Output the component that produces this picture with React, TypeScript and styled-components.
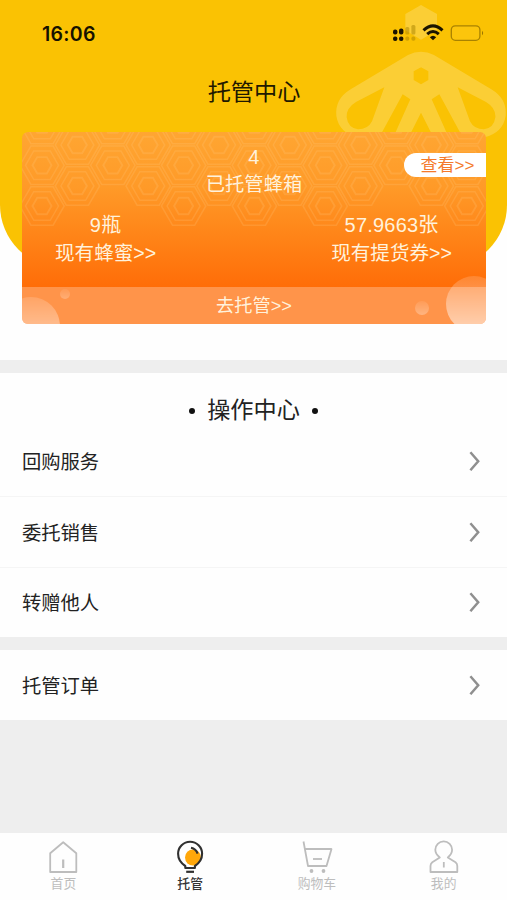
import React from 'react';
import styled, { createGlobalStyle } from 'styled-components';

const GlobalStyle = createGlobalStyle`
  * { box-sizing: border-box; }
  body {
    margin: 0;
    background: #eee;
    font-family: "Liberation Sans", "Noto Sans CJK SC", sans-serif;
    color: #222;
  }
`;

const Screen = styled.div`
  display: flex;
  flex-direction: column;
  width: 507px;
  height: 900px;
  overflow: hidden;
  background: #eee;
`;

const Hero = styled.header`
  position: relative;
  flex: none;
  height: 360px;
  padding: 0 21px 0 22px;
  background: #fefefe;
`;

const HeroShape = styled.div`
  position: absolute;
  inset: 0 0 auto 0;
  height: 268px;
  border-radius: 0 0 63px 63px;
  background: #fac203;
  overflow: hidden;
`;

const BeeMark = styled.svg`
  position: absolute;
  top: 0;
  right: 0;
`;

const StatusBar = styled.div`
  position: relative;
  display: flex;
  align-items: center;
  justify-content: space-between;
  height: 66px;
  padding: 0 1px 0 20px;
`;

const Clock = styled.span`
  padding-top: 1px;
  font: 600 19.5px/24px Inter, sans-serif;
  letter-spacing: 0.3px;
  color: #161100;
`;

const Title = styled.h1`
  position: relative;
  margin: 0;
  height: 66px;
  padding-top: 9px;
  font-size: 23.2px;
  line-height: 34px;
  font-weight: 400;
  text-align: center;
  color: #201800;
`;

const Card = styled.section`
  position: relative;
  display: flex;
  flex-direction: column;
  height: 192px;
  border-radius: 6px;
  overflow: hidden;
  background: linear-gradient(#ffa632 0, #ff9a28 55px, #ff8619 100px, #ff6d08 155px);
  color: #fff2dc;
`;

const CardArt = styled.svg`
  position: absolute;
  inset: 0;
`;

const Stat = styled.div`
  position: relative;
  display: flex;
  flex-direction: column;
  align-items: center;
  font-size: 19.6px;
  line-height: 28.8px;
  white-space: nowrap;
`;

const Value = styled.span`
  font-size: 20px;
  letter-spacing: 0.2px;
`;

const Total = styled(Stat)`
  padding-top: 10.5px;
  height: 77.5px;
  font-size: 19.3px;
`;

const Pair = styled.div`
  display: flex;
  justify-content: space-between;
  flex: 1;
  padding: 1px 34px 0 33px;
`;

const Pill = styled.button`
  position: absolute;
  top: 21px;
  right: 0;
  width: 82px;
  height: 24px;
  padding: 0 0 0 5px;
  border: 0;
  border-radius: 12px 0 0 12px;
  background: #fff;
  color: #f47a2c;
  font: inherit;
  font-size: 17px;
  line-height: 23px;
`;

const CardAction = styled.button`
  position: relative;
  height: 37px;
  padding: 2px 0 0;
  border: 0;
  background: rgba(255, 255, 255, 0.27);
  color: #fff2dc;
  font: inherit;
  font-size: 18.2px;
  line-height: 35px;
`;

const Panel = styled.section<{ $gap: number }>`
  flex: none;
  margin-top: ${({ $gap }) => $gap}px;
  background: #fefefe;
`;

const Heading = styled.h2`
  display: flex;
  align-items: center;
  justify-content: center;
  gap: 12px;
  height: 53px;
  margin: 0;
  padding-top: 22px;
  font-size: 23.2px;
  line-height: 31px;
  font-weight: 400;
`;

const Dot = styled.i`
  width: 6px;
  height: 6px;
  border-radius: 50%;
  background: #111;
`;

const Row = styled.div`
  display: flex;
  align-items: center;
  justify-content: space-between;
  height: 70.3px;
  padding: 0 27px 0 22px;
  font-size: 19.3px;
  line-height: 28px;

  & + & { border-top: 1.5px solid #f5f5f5; }
`;

const RowLabel = styled.span`
  padding-top: 4px;
`;

const TabBar = styled.nav`
  display: grid;
  grid-template-columns: repeat(4, 1fr);
  height: 67px;
  margin-top: auto;
  background: #fefefe;
`;

const Tab = styled.div<{ $active?: boolean }>`
  display: flex;
  flex-direction: column;
  align-items: center;
  padding-top: 7px;
  font-size: 12.8px;
  line-height: 20px;
  font-weight: ${({ $active }) => ($active ? 500 : 400)};
  color: ${({ $active }) => ($active ? '#333' : '#bdbdbd')};

  svg { flex: none; }
`;

const beeHalf =
  'M303 155 Q283 155 264 165 L92 268 Q44 297 49 348 Q57 398 112 412 L303 412 Z' +
  'M193 262 L108 306 Q78 324 80 352 Q84 384 114 388 Q144 388 156 364 Z' +
  'M248 283 L271 298 L220 412 L178 412 Z' +
  'M303 338 L266 412 L303 412 Z' +
  'M303 202 L281 214 L281 240 L303 253 Z';

function Bee() {
  return (
    <BeeMark width="187" height="140" viewBox="0 0 561 420">
      <g fill="#fff" fillOpacity="0.2" fillRule="evenodd">
        <path d="M303 15 L351 42 L351 91 L303 119 L256 91 L256 42 Z" />
        <path d={beeHalf} />
        <path d={beeHalf} transform="matrix(-1 0 0 1 606 0)" />
      </g>
    </BeeMark>
  );
}

function hexPoints(cx: number, cy: number, r: number) {
  return [0, 60, 120, 180, 240, 300]
    .map((deg) => {
      const a = (deg * Math.PI) / 180;
      return `${(cx + r * Math.cos(a)).toFixed(1)},${(cy + r * Math.sin(a)).toFixed(1)}`;
    })
    .join(' ');
}

const deepColumns = [0, 4, 6, 8, 12];
const cells = Array.from({ length: 13 }, (_, i) => {
  const x = 20 + i * 35.4;
  if (i % 2) return [[x, 13], [x, 54]];
  const column = [[x, -7.5], [x, 33.3]];
  return deepColumns.includes(i) ? [...column, [x, 74]] : column;
}).flat();

function Honeycomb() {
  return (
    <CardArt width="464" height="192" viewBox="0 0 464 192">
      <defs>
        <linearGradient id="bubble" x1="0" y1="0" x2="0" y2="1">
          <stop offset="0" stopColor="#fff" stopOpacity="0.15" />
          <stop offset="1" stopColor="#fff" stopOpacity="0.6" />
        </linearGradient>
      </defs>
      <g fill="none" stroke="#ffd08a" strokeOpacity="0.19" strokeWidth="1.5">
        {cells.map(([x, y]) => (
          <g key={`${x}-${y}`}>
            <polygon points={hexPoints(x, y, 22.2)} />
            <polygon points={hexPoints(x, y, 16.5)} />
            <polygon points={hexPoints(x, y, 9.5)} strokeWidth="1.9" />
          </g>
        ))}
      </g>
      <g fill="url(#bubble)">
        <circle cx="9" cy="194" r="29" />
        <circle cx="43" cy="162" r="5" opacity="0.4" />
        <circle cx="400" cy="176" r="7" opacity="0.5" />
        <circle cx="452" cy="172" r="28" />
      </g>
    </CardArt>
  );
}

function StatusIcons() {
  return (
    <svg width="92" height="22" viewBox="0 0 92 22">
      <g fill="#1b1400">
        <rect x="0" y="7.5" width="4.4" height="5" rx="2" />
        <rect x="6" y="6.5" width="4.4" height="6" rx="2" />
        <rect x="0" y="14.5" width="4.4" height="4.4" rx="2" />
        <rect x="6" y="14.5" width="4.4" height="4.4" rx="2" />
      </g>
      <g fill="#a88100" fillOpacity="0.5">
        <rect x="12.3" y="5" width="4" height="7.6" rx="1.5" />
        <rect x="18.4" y="3" width="4" height="9.6" rx="1.5" />
        <rect x="12.3" y="14.5" width="4" height="4.2" rx="1.8" />
        <rect x="18.4" y="14.5" width="4" height="4.2" rx="1.8" />
      </g>
      <g fill="none" stroke="#1b1400" strokeWidth="3">
        <path d="M30.5 8.4 Q40 -0.6 49.5 8.4" />
        <path d="M34.2 12.2 Q40 6.8 45.8 12.2" />
      </g>
      <path d="M36.8 15.2 Q40 12.2 43.2 15.2 L40 18.2 Z" fill="#1b1400" />
      <rect x="58.3" y="3.8" width="28.6" height="14.5" rx="4" fill="#fcc50c" stroke="#a98200" strokeWidth="1.3" />
      <path d="M89 8.7 Q91.3 11 89 13.3 Z" fill="#9c7700" />
    </svg>
  );
}

function Chevron() {
  return (
    <svg width="11" height="20" viewBox="0 0 11 20" fill="none" stroke="#8f8f8f" strokeWidth="2.5">
      <path d="M1.4 1.2 L9.2 10.2 L1.4 19.2" />
    </svg>
  );
}

const iconProps = {
  width: 32,
  height: 34,
  viewBox: '0 0 32 34',
  fill: 'none',
  stroke: '#bdbdbd',
  strokeWidth: 1.8,
  strokeLinejoin: 'round' as const,
};

const HomeIcon = () => (
  <svg {...iconProps}>
    <path d="M3.2 13.3 L16.2 2.2 L29.3 13.3 V32 H3.2 Z" />
    <path d="M16.2 19.5 V28" strokeWidth="2.2" />
  </svg>
);

const BulbIcon = () => (
  <svg {...iconProps} stroke="#303030" strokeWidth="2.1">
    <circle cx="19" cy="17.5" r="8" fill="#ffa70a" stroke="none" />
    <path d="M11.3 28 V26 Q4.1 21.3 4.1 13.8 A12 12 0 0 1 28.1 13.8 Q28.1 21.3 20.9 26 V28 Z" />
    <path d="M17 7.8 Q22 8.9 23.6 13.6" />
    <path d="M12.2 31.8 H20" strokeWidth="2.2" />
  </svg>
);

const CartIcon = () => (
  <svg {...iconProps}>
    <path d="M2.5 1.5 L7 26 H25.5 L30.5 9 H4" />
    <path d="M12 19 H21" strokeWidth="1.8" />
    <g fill="#bdbdbd" stroke="none">
      <circle cx="10.5" cy="31" r="1.9" />
      <circle cx="22.5" cy="31" r="1.9" />
    </g>
  </svg>
);

const PersonIcon = () => (
  <svg {...iconProps}>
    <path d="M11.8 17.5 Q7.3 14 7.3 9.8 A8.4 8.4 0 0 1 24.1 9.8 Q24.1 14 19.8 17.5 L27.5 22.3 Q29.3 23.7 29.3 26 V32 H2.5 V26 Q2.5 23.7 4.3 22.3 Z" />
    <path d="M15.8 22 V27.5" />
  </svg>
);

const services = ['回购服务', '委托销售', '转赠他人'];

export default function App() {
  return (
    <Screen>
      <GlobalStyle />
      <Hero>
        <HeroShape>
          <Bee />
        </HeroShape>
        <StatusBar>
          <Clock>16:06</Clock>
          <StatusIcons />
        </StatusBar>
        <Title>托管中心</Title>
        <Card>
          <Honeycomb />
          <Total>
            <Value>4</Value>
            <span>已托管蜂箱</span>
          </Total>
          <Pair>
            <Stat>
              <Value>9瓶</Value>
              <span>现有蜂蜜&gt;&gt;</span>
            </Stat>
            <Stat>
              <Value>57.9663张</Value>
              <span>现有提货券&gt;&gt;</span>
            </Stat>
          </Pair>
          <CardAction>去托管&gt;&gt;</CardAction>
          <Pill>查看&gt;&gt;</Pill>
        </Card>
      </Hero>
      <Panel $gap={13}>
        <Heading>
          <Dot />
          操作中心
          <Dot />
        </Heading>
        {services.map((name) => (
          <Row key={name}>
            <RowLabel>{name}</RowLabel>
            <Chevron />
          </Row>
        ))}
      </Panel>
      <Panel $gap={13}>
        <Row>
          <RowLabel>托管订单</RowLabel>
          <Chevron />
        </Row>
      </Panel>
      <TabBar>
        <Tab><HomeIcon />首页</Tab>
        <Tab $active><BulbIcon />托管</Tab>
        <Tab><CartIcon />购物车</Tab>
        <Tab><PersonIcon />我的</Tab>
      </TabBar>
    </Screen>
  );
}
